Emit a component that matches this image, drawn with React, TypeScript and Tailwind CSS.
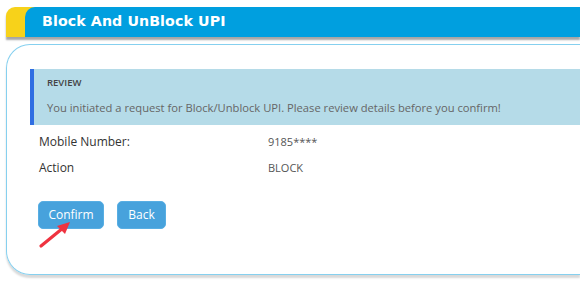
export default function App() {
  return (
    <div className="w-[580px] h-[282px] bg-white overflow-hidden pl-[6px] pt-[7px] font-['Open_Sans',sans-serif] relative">
      {/* header tab */}
      <div className="h-[30px] bg-[#f7d21a] rounded-tl-[9px] shadow-[0_3px_2px_rgba(0,0,0,0.35)]">
        <div className="ml-[19px] h-full bg-[#009fdf] rounded-tl-[10px] flex items-center pl-[17px]">
          <h1 className="text-white font-bold text-[14.2px] tracking-[0.1px] font-['DejaVu_Sans',sans-serif]">
            Block And UnBlock UPI
          </h1>
        </div>
      </div>

      {/* card */}
      <div className="mt-[7px] h-[231px] border-[1.5px] border-r-0 border-[#86d0ef] rounded-l-[24px] shadow-[0_3px_2px_rgba(0,0,0,0.15)] pt-[24px]">
        <div className="ml-[23px] h-[56px] bg-[#b5dbe8] border-l-[4px] border-[#2f6ee2] pl-[13px] flex flex-col">
          <p className="text-[9.5px] font-semibold text-[#444] mt-[8px] leading-[12px]">REVIEW</p>
          <p className="text-[11.2px] text-[#666] mt-[12px] leading-[14px]">
            You initiated a request for Block/Unblock UPI. Please review details before you confirm!
          </p>
        </div>

        <div className="ml-[32px] mt-[4px] text-[12px] text-[#333]">
          <div className="flex h-[26px] items-center">
            <span className="w-[229px]">Mobile Number:</span>
            <span className="text-[11px] text-[#555]">9185****</span>
          </div>
          <div className="flex h-[26px] items-center">
            <span className="w-[229px]">Action</span>
            <span className="text-[11px] text-[#555]">BLOCK</span>
          </div>
        </div>

        <div className="ml-[31px] mt-[20px] flex gap-[13px]">
          <button className="w-[66px] h-[28px] rounded-[5px] bg-[#47a2dc] text-white text-[12px] border border-[#58aee3]">
            Confirm
          </button>
          <button className="w-[49px] h-[28px] rounded-[5px] bg-[#47a2dc] text-white text-[12px] border border-[#58aee3]">
            Back
          </button>
        </div>
      </div>

      {/* red pointer arrow */}
      <svg className="absolute left-[36px] top-[218px]" width="40" height="34" viewBox="0 0 40 34">
        <line x1="5" y1="28" x2="27" y2="10" stroke="#ef3340" strokeWidth="3.2" strokeLinecap="round" />
        <polygon points="34,4 21,8 29,16" fill="#ef3340" />
      </svg>
    </div>
  );
}
